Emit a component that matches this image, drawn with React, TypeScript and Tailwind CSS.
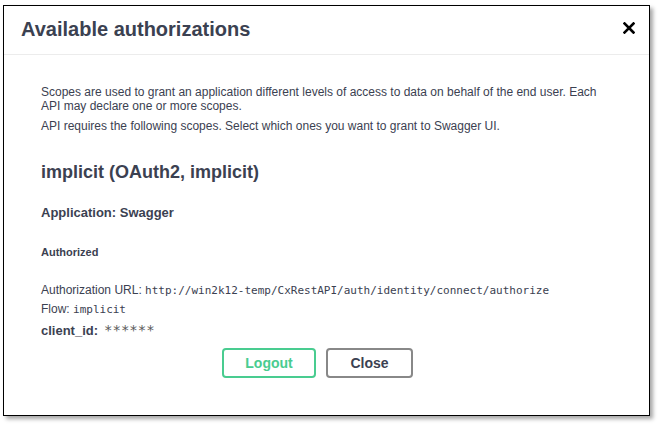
import React from 'react';

const sans = { fontFamily: '"Liberation Sans", Arial, sans-serif' };

function CloseIcon() {
  return (
    <svg className="h-[12px] w-[12px]" viewBox="0 0 12 12" aria-hidden="true">
      <path d="M1.5 1.5l9 9M10.5 1.5l-9 9" stroke="#000" strokeWidth="2.6" strokeLinecap="square" />
    </svg>
  );
}

export default function App() {
  return (
    <div className="h-[425px] w-[659px] bg-white font-['Liberation_Sans',Arial,sans-serif] text-[#3b4151]">
      <div className="pl-[3px] pt-[5px]">
        <div className="h-[411px] w-[647px] border border-black bg-white shadow-[3px_3px_4px_rgba(0,0,0,0.35)]">
          <div className="flex h-[49px] items-center justify-between border-b border-[#ececec] pl-[17px] pr-[14px]">
            <h3 className="mb-[1px] text-[20px] font-bold leading-[23px] text-[#3b4151]">Available authorizations</h3>
            <button type="button" className="mb-[4px] flex items-center">
              <CloseIcon />
            </button>
          </div>

          <div className="px-[37px]">
            <p className="mt-[30px] pr-[4px] text-[12px] leading-[14px]">
              Scopes are used to grant an application different levels of access to data on behalf of the end user. Each
              API may declare one or more scopes.
            </p>
            <p className="mt-[6px] text-[12px] leading-[14px]">
              API requires the following scopes. Select which ones you want to grant to Swagger UI.
            </p>

            <h4 className="mt-[29px] text-[18px] font-bold leading-[21px]">implicit (OAuth2, implicit)</h4>
            <h6 className="mt-[22px] text-[13px] font-bold leading-[15px]">Application: Swagger</h6>
            <h6 className="mt-[26px] text-[11px] font-bold leading-[13px]">Authorized</h6>

            <p className="mt-[24px] text-[12px] leading-[14px]">
              Authorization URL:{' '}
              <code className="font-['DejaVu_Sans_Mono',monospace] text-[11px]">
                http://win2k12-temp/CxRestAPI/auth/identity/connect/authorize
              </code>
            </p>
            <p className="mt-[4px] text-[12px] leading-[14px]">
              Flow: <code className="font-['DejaVu_Sans_Mono',monospace] text-[11px]">implicit</code>
            </p>
            <div className="mt-[6px] flex items-baseline text-[13px] leading-[15px]">
              <label className="font-bold">client_id:</label>
              <code className="ml-[6px] font-['DejaVu_Sans_Mono',monospace] text-[14px] text-[#5a5a5a]">******</code>
            </div>

            <div className="mt-[10px] flex justify-center pr-[18px]" style={sans}>
              <button
                type="button"
                className="mr-[10px] h-[30px] w-[94px] rounded-[4px] border-2 border-[#49cc90] text-[14px] font-bold text-[#49cc90]"
              >
                Logout
              </button>
              <button
                type="button"
                className="h-[30px] w-[87px] rounded-[4px] border-2 border-[#888] text-[14px] font-bold text-[#3b4151]"
              >
                Close
              </button>
            </div>
          </div>
        </div>
      </div>
    </div>
  );
}
